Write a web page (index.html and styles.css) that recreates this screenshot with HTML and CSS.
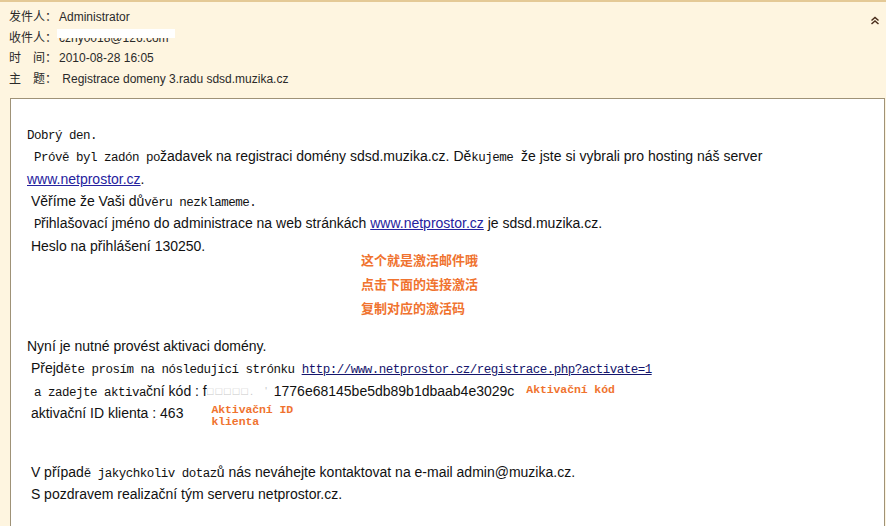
FILE: index.html
```html
<!DOCTYPE html>
<html lang="cs">
<head>
    <meta charset="UTF-8">
    <title>Registrace domeny 3.radu sdsd.muzika.cz</title>
    <link rel="stylesheet" href="styles.css">
</head>
<body>
    <div class="mail-head">
        <div class="fields">
            <div class="field"><span class="label">发件人：</span>Administrator</div>
            <div class="field"><span class="label">收件人：</span><span class="hidden-addr">czhy0018@126.com</span></div>
            <div class="field"><span class="label">时　间：</span>2010-08-28 16:05</div>
            <div class="field"><span class="label">主　题：</span> Registrace domeny 3.radu sdsd.muzika.cz</div>
        </div>
        <svg class="collapse" width="10" height="9" viewBox="0 0 10 9">
            <path d="M1.5 4.5 L5 1.5 L8.5 4.5 M1.5 8 L5 5 L8.5 8" fill="none" stroke="#4a2e1c" stroke-width="1.5"/>
        </svg>
    </div>

    <div class="mail-body">
        <div class="line"><span class="m">Dobrý den.</span></div>
        <div class="line"><span class="m"> Próvě byl zadón po</span>žadavek na registraci domény sdsd.muzika.cz. Dě<span class="m">kujeme</span>  že jste si vybrali pro hosting náš server</div>
        <div class="line"><a href="#" class="web">www.netprostor.cz</a>.</div>
        <div class="line"> Věříme že Vaši dů<span class="m">věru nezklameme.</span></div>
        <div class="line"><span class="m"> P</span>řihlašovací jméno do administrace na web stránkách <a href="#" class="web">www.netprostor.cz</a> je sdsd.muzika.cz.</div>
        <div class="line"> Heslo na přihlášení 130250.</div>

        <div class="note">
            <div>这个就是激活邮件哦</div>
            <div>点击下面的连接激活</div>
            <div>复制对应的激活码</div>
        </div>

        <div class="line gap-a">Nyní je nutné provést aktivaci domény.</div>
        <div class="line"> Přejd<span class="m">ěte prosím na nósledující strónku </span><a href="#" class="m url">http://www.netprostor.cz/registrace.php?activate=1</a></div>
        <div class="line"><span class="m"> a zadejte aktiva</span>ční kód : f<span class="redact">□□□□□.  '</span>1776e68145be5db89b1dbaab4e3029c<span class="tag tag-code">Aktivační kód</span></div>
        <div class="line"> aktivační ID klienta : 463<span class="tag tag-id">Aktivační ID<br>klienta</span></div>

        <div class="line gap-b"> V případ<span class="m">ě jakychkoliv dotaz</span>ů nás neváhejte kontaktovat na e-mail admin@muzika.cz.</div>
        <div class="line"> S pozdravem realizační tým serveru netprostor.cz.</div>
    </div>
</body>
</html>
```

FILE: styles.css
```css
/* okno se zprávou */
body {
    margin: 0;
    background-color: #fef5e0;
    border-top: 2px solid #e4c996;
    font-family: "Liberation Sans", Arial, sans-serif;
    overflow: hidden;
}

.mail-head {
    display: flex;
    justify-content: space-between;
    padding: 5px 6px 0 9px;
    font-size: 12px;
    color: #2a2a2a;
}

.field {
    height: 20.7px;
    line-height: 20.7px;
    white-space: pre;
}

.label {
    display: inline-block;
    width: 50px;
    font-family: "Noto Sans CJK SC", sans-serif;
    font-size: 12px;
    line-height: 14px;
}

.hidden-addr {
    position: relative;
}

.hidden-addr::after {
    content: "";
    position: absolute;
    left: -2px;
    right: -6px;
    top: -2px;
    height: 9px;
    background-color: #ffffff;
}

.collapse {
    margin-top: 9px;
}

.mail-body {
    margin: 8px 1px 0 10px;
    padding: 24px 16px 40px 16px;
    background-color: #ffffff;
    border: 1px solid #9f9277;
    border-bottom: none;
    font-size: 14px;
    color: #111;
    min-height: 400px;
}

.line {
    height: 22.4px;
    line-height: 22.4px;
    white-space: pre;
}

.m {
    font-family: "Liberation Mono", "Courier New", monospace;
    font-size: 12.5px;
    letter-spacing: -0.5px;
    line-height: 14px;
}

.web {
    color: #25229e;
    line-height: 14px;
}

.url {
    color: #15156c;
}

.redact {
    display: inline-block;
    width: 67px;
    overflow: hidden;
    color: #c9c9c9;
    font-size: 11px;
    letter-spacing: 2px;
    line-height: 14px;
    vertical-align: -2px;
}

.note {
    margin: -9px 0 0 334px;
    font-family: "Noto Sans CJK SC", sans-serif;
    font-weight: bold;
    font-size: 13px;
    line-height: 24px;
    color: #f0732f;
}

.gap-a {
    margin-top: 15px;
}

.gap-b {
    margin-top: 36px;
}

.tag {
    display: inline-block;
    font-family: "Liberation Mono", "Courier New", monospace;
    font-weight: bold;
    font-size: 11.5px;
    letter-spacing: -0.1px;
    color: #f0732f;
    white-space: pre;
}

.tag-code {
    margin-left: 12px;
    line-height: 14px;
    vertical-align: 3px;
}

.tag-id {
    margin-left: 28px;
    line-height: 12px;
    vertical-align: top;
    margin-top: 2px;
    margin-bottom: -6px;
}
```
